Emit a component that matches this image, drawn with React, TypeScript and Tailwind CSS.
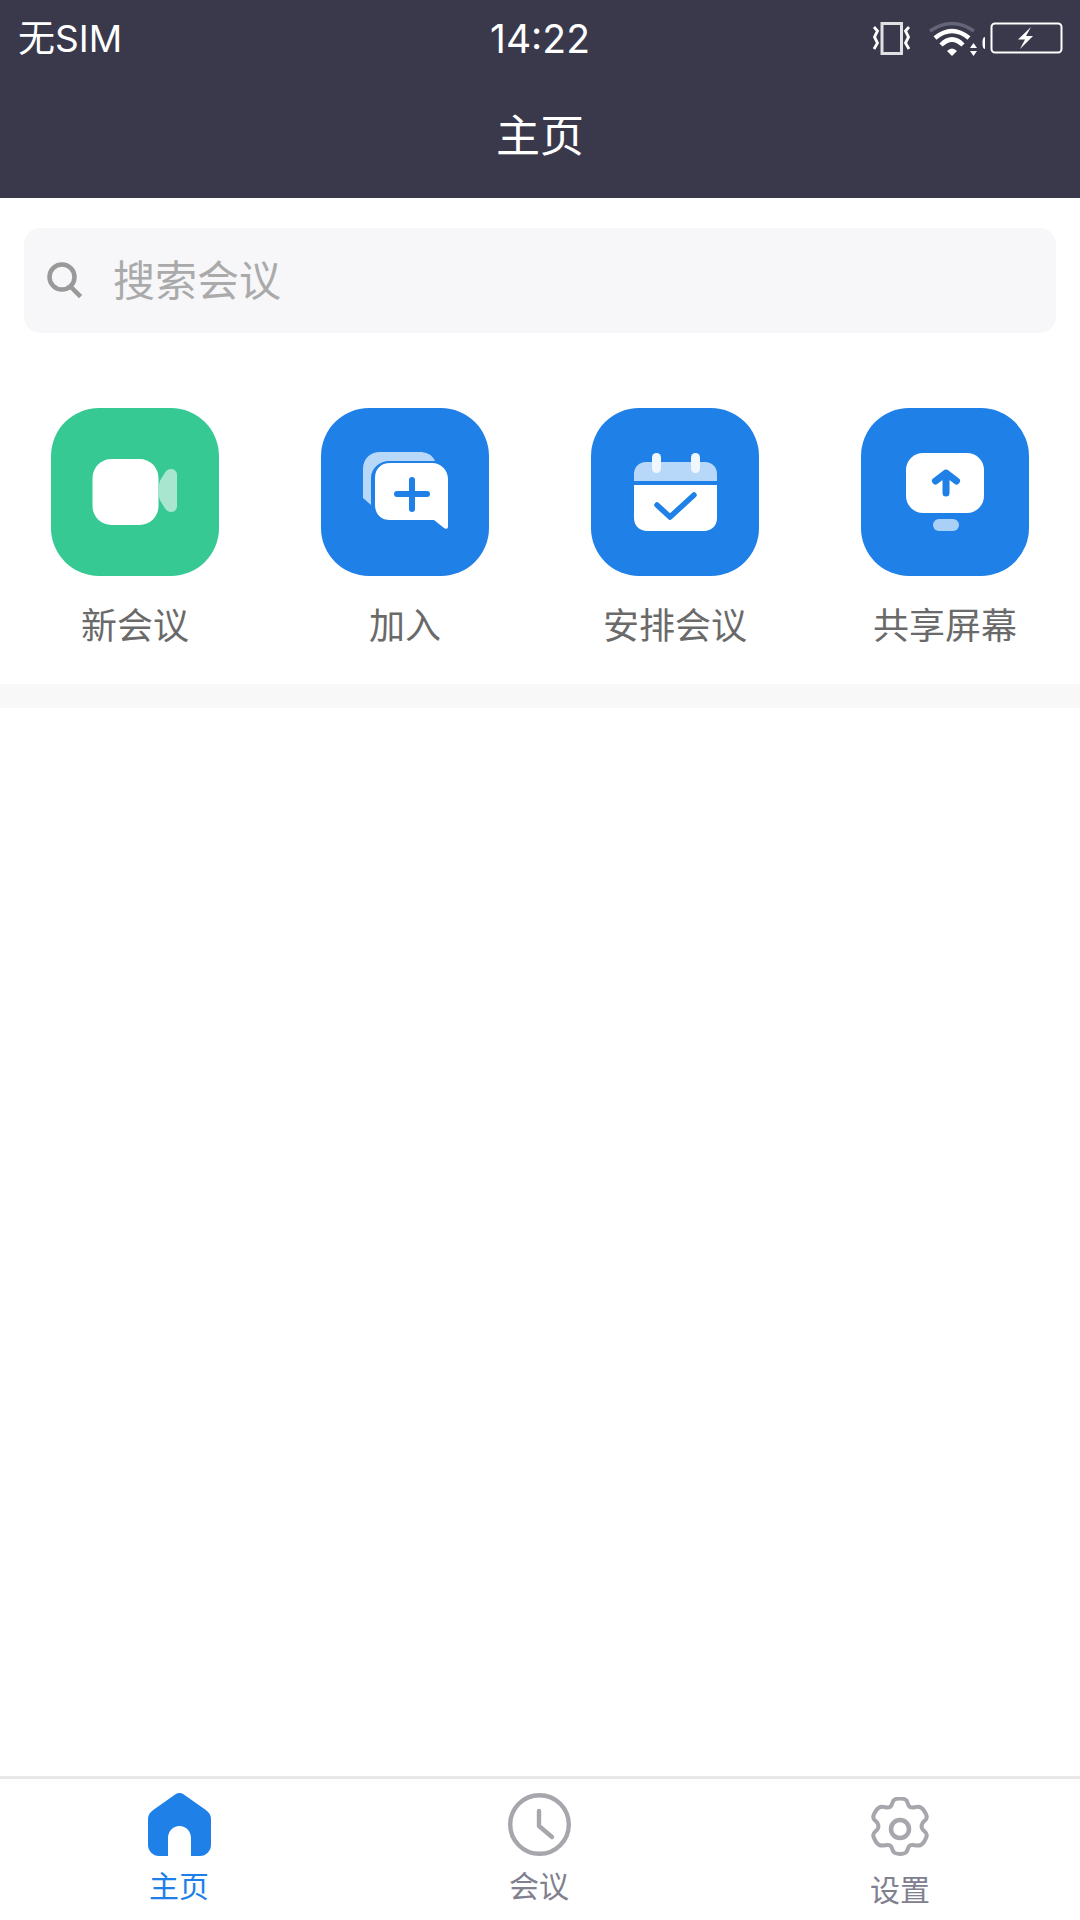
const FONT = "font-['Inter','Noto_Sans_CJK_SC',sans-serif]";

function VideoIcon() {
  return (
    <svg viewBox="0 0 168 168" className="w-full h-full">
      <rect x="41.500" y="51" width="66" height="66" rx="19" fill="#fff" />
      <path d="M120 61c3.500 0 6 2.500 6 6v31c0 3.500-2.500 6-6 6-2.500 0-4.500-1.500-6-3.500l-4-6.500c-1.500-2.500-2-4.500-2-7V78c0-2.500.5-4.500 2-7l4-6.500c1.500-2 3.500-3.500 6-3.500z" fill="#a8e6cf" />
    </svg>
  );
}

function JoinIcon() {
  return (
    <svg viewBox="0 0 168 168" className="w-full h-full">
      <path d="M59 44h39c7 0 13 2 16 9H68c-9 0-18 7-18 17v27l-8-7V61c0-10 7-17 17-17z" fill="#b8d8fa" />
      <path d="M69 55h42c9 0 16 7 16 16v47c0 3-2 3.500-4 2l-10-8H69c-9 0-15-6-15-15V70c0-9 6-15 15-15z" fill="#fff" />
      <path d="M91 72v29M76 86h30" stroke="#1f80e8" strokeWidth="6" strokeLinecap="round" fill="none" />
    </svg>
  );
}

function CalendarIcon() {
  return (
    <svg viewBox="0 0 168 168" className="w-full h-full">
      <path d="M55 54h59c7 0 12 5 12 12v7H43v-7c0-7 5-12 12-12z" fill="#b8d8fa" />
      <path d="M43 77h83v33c0 8-6 13-13 13H56c-7 0-13-5-13-13z" fill="#fff" />
      <rect x="61" y="45" width="9" height="20" rx="4.500" fill="#f0f7fe" />
      <rect x="100" y="45" width="9" height="20" rx="4.500" fill="#f0f7fe" />
      <path d="M66 97l13 12 24-22" stroke="#1f80e8" strokeWidth="5.500" strokeLinecap="round" strokeLinejoin="round" fill="none" />
    </svg>
  );
}

function ShareIcon() {
  return (
    <svg viewBox="0 0 168 168" className="w-full h-full">
      <rect x="45" y="45" width="78" height="60" rx="17" fill="#fff" />
      <rect x="72" y="111" width="26" height="12" rx="6" fill="#abd0f8" />
      <path d="M85 85V65M74.500 73L85 65l10.500 8" stroke="#1f80e8" strokeWidth="7" strokeLinecap="round" strokeLinejoin="round" fill="none" />
    </svg>
  );
}

function StatusIcons() {
  return (
    <svg viewBox="0 0 200 50" className="w-[200px] h-[50px]">
      <rect x="12" y="6.500" width="19.500" height="30" fill="none" stroke="#e0e0e4" strokeWidth="3" />
      <path d="M4 10l3.500 4-3 6 3 6-3.500 6" fill="none" stroke="#fff" strokeWidth="2.800" />
      <path d="M39 10l-3.500 4 3 6-3 6 3.500 6" fill="none" stroke="#fff" strokeWidth="2.800" />
      <path d="M60 14Q82-1 104 14" fill="none" stroke="#64647a" strokeWidth="3.500" />
      <path d="M65 21Q82 7 99 21" fill="none" stroke="#fff" strokeWidth="4.500" />
      <path d="M71 28Q82 17 93 28" fill="none" stroke="#fff" strokeWidth="4.500" />
      <path d="M77 34Q82 29 87 34L82 39z" fill="#fff" />
      <path d="M100 31l3.500-5 3.500 5zM100 34h7l-3.500 5z" fill="#fff" />
      <path d="M115 20c-2 .5-2.500 2-2.500 6 0 4 .5 5.500 2.500 6z" fill="#fff" />
      <rect x="121.500" y="6.500" width="70" height="29" rx="3.500" fill="none" stroke="#fff" strokeWidth="2" />
      <path d="M161 10l-13 12.500h7l-5 9.500 13-13h-7z" fill="#fff" />
    </svg>
  );
}

function SearchIcon() {
  return (
    <svg viewBox="0 0 36 40" className="w-[36px] h-[40px]">
      <circle cx="15" cy="16" r="12.500" fill="none" stroke="#999" strokeWidth="4.500" />
      <path d="M24 26l8 8" stroke="#999" strokeWidth="4.500" strokeLinecap="square" />
    </svg>
  );
}

function HomeTab() {
  return (
    <svg viewBox="0 0 63 63" className="w-[63px] h-[63px]">
      <path d="M27.500 1.300c2.500-1.700 5.500-1.700 8 0l22 15.500C61 19.300 63 22 63 26v26c0 6-5 11-11 11h-9V45c0-6.500-5-12-11.500-12S20 38.500 20 45v18h-9C5 63 0 58 0 52V26c0-4 2-6.700 5.500-9.200z" fill="#1f80e8" />
    </svg>
  );
}

function ClockTab() {
  return (
    <svg viewBox="0 0 63 63" className="w-[63px] h-[63px]">
      <circle cx="31.500" cy="31.500" r="29.300" fill="none" stroke="#a6a6ac" strokeWidth="4.400" />
      <path d="M31 18v15l13 11" fill="none" stroke="#a6a6ac" strokeWidth="4.400" strokeLinecap="round" strokeLinejoin="round" />
    </svg>
  );
}

function GearTab() {
  return (
    <svg viewBox="0 0 60 64" className="w-[60px] h-[64px]">
      <path
        d="M23.500 3.500c1-1.300 2.300-2 6.500-2s5.500.7 6.500 2c1.500 2 1.200 5 3.500 6.500 2.300 1.300 5-.2 8-.2 2.800 0 4.200 1 6 3.800 2 3 2.800 5 2.800 6.700 0 2.500-2.800 3.700-4.200 5.700-1.300 2-1.300 4.400 0 6.400 1.400 2 4.200 3.200 4.200 5.700 0 1.700-.8 3.700-2.800 6.700-1.800 2.800-3.200 3.800-6 3.800-3 0-5.700-1.500-8-.2-2.300 1.500-2 4.500-3.500 6.500-1 1.300-2.300 2-6.500 2s-5.500-.7-6.500-2c-1.500-2-1.200-5-3.500-6.500-2.300-1.300-5 .2-8 .2-2.800 0-4.200-1-6-3.800-2-3-2.800-5-2.800-6.700 0-2.500 2.800-3.700 4.200-5.700 1.300-2 1.300-4.400 0-6.400-1.400-2-4.200-3.200-4.200-5.700 0-1.700.8-3.700 2.800-6.700 1.800-2.800 3.200-3.800 6-3.800 3 0 5.700 1.500 8 .2 2.300-1.500 2-4.500 3.500-6.500z"
        fill="none"
        stroke="#a6a6ac"
        strokeWidth="4"
      />
      <circle cx="30" cy="32" r="9" fill="none" stroke="#a6a6ac" strokeWidth="4.500" />
    </svg>
  );
}

const actions = [
  { label: "新会议", bg: "bg-[#36c994]", Icon: VideoIcon },
  { label: "加入", bg: "bg-[#1f80e8]", Icon: JoinIcon },
  { label: "安排会议", bg: "bg-[#1f80e8]", Icon: CalendarIcon },
  { label: "共享屏幕", bg: "bg-[#1f80e8]", Icon: ShareIcon },
];

export default function App() {
  return (
    <div className={`w-[1080px] h-[1920px] flex flex-col bg-white ${FONT}`}>
      <header className="h-[198px] shrink-0 bg-[#39394b] text-white flex flex-col">
        <div className="h-[76px] grid grid-cols-3 items-center leading-none">
          <div className="pl-[18px] text-[37px]">无SIM</div>
          <div className="text-center text-[39px]">14:22</div>
          <div className="flex justify-end pr-[10px] pt-[8px]">
            <StatusIcons />
          </div>
        </div>
        <div className="h-[118px] flex items-center justify-center text-[44px] leading-none pt-[2px]">主页</div>
      </header>

      <div className="mt-[30px] mx-[24px] h-[105px] shrink-0 rounded-[16px] bg-[#f7f7f9] flex items-center pl-[23px] gap-[30px]">
        <SearchIcon />
        <span className="text-[42px] leading-none text-[#aaaaaa]">搜索会议</span>
      </div>

      <div className="mt-[75px] grid grid-cols-4 h-[276px] shrink-0">
        {actions.map(({ label, bg, Icon }) => (
          <div key={label} className="flex flex-col items-center">
            <div className={`w-[168px] h-[168px] rounded-[48px] ${bg}`}>
              <Icon />
            </div>
            <div className="mt-[32px] text-[36px] leading-none text-[#6a6a6a]">{label}</div>
          </div>
        ))}
      </div>

      <div className="h-[24px] shrink-0 bg-[#f8f8f8]" />
      <div className="flex-1" />

      <nav className="h-[144px] shrink-0 border-t-[3px] border-[#e8e8e8] grid grid-cols-3">
        <div className="flex flex-col items-center pt-[14px] pr-[2px]">
          <HomeTab />
          <div className="mt-[15px] text-[30px] leading-none text-[#1f7fe8]">主页</div>
        </div>
        <div className="flex flex-col items-center pt-[14px] pr-[2px]">
          <ClockTab />
          <div className="mt-[15px] text-[30px] leading-none text-[#80808f]">会议</div>
        </div>
        <div className="flex flex-col items-center pt-[18px]">
          <GearTab />
          <div className="mt-[14px] text-[30px] leading-none text-[#80808f]">设置</div>
        </div>
      </nav>
    </div>
  );
}
